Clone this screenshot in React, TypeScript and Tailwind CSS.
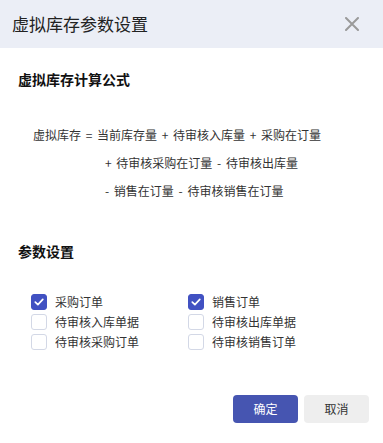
import React, { useState } from "react";

const font = { fontFamily: '"Noto Sans CJK SC", "Noto Sans", sans-serif' };

function Check({ checked }: { checked: boolean }) {
  return (
    <span
      className={
        "w-4 h-4 rounded-[3px] flex items-center justify-center shrink-0 " +
        (checked ? "bg-[#4151c2] border border-[#4151c2]" : "bg-white border border-[#d3d8e6]")
      }
    >
      {checked && (
        <svg width="12" height="12" viewBox="0 0 12 12">
          <path d="M2.3 6.2 L4.9 8.7 L9.8 3.4" fill="none" stroke="white" strokeWidth="1.7" strokeLinecap="round" strokeLinejoin="round" />
        </svg>
      )}
    </span>
  );
}

export default function App() {
  const [vals, setVals] = useState<boolean[]>([true, true, false, false, false, false]);
  const labels = ["采购订单", "销售订单", "待审核入库单据", "待审核出库单据", "待审核采购订单", "待审核销售订单"];
  const toggle = (i: number) => setVals((v) => v.map((x, j) => (j === i ? !x : x)));
  return (
    <div className="w-[383px] h-[443px] bg-white flex flex-col" style={font}>
      <div className="h-12 bg-[#ebeef6] flex items-center justify-between pl-3 pr-[24px] shrink-0">
        <span className="text-[17px] text-[#222]">虚拟库存参数设置</span>
        <svg width="14" height="14" viewBox="0 0 14 14">
          <path d="M1 1 L13 13 M13 1 L1 13" stroke="#9a9a9a" strokeWidth="2" strokeLinecap="round" />
        </svg>
      </div>
      <div className="pl-[18px] pt-[21px] text-[14px] font-bold text-[#111] leading-5">虚拟库存计算公式</div>
      <div className="text-[12px] text-[#333] leading-[28px] mt-[32px] [word-spacing:2px]">
        <div className="pl-[33px]">虚拟库存 = 当前库存量 + 待审核入库量 + 采购在订量</div>
        <div className="pl-[105px]">+ 待审核采购在订量 - 待审核出库量</div>
        <div className="pl-[105px]">- 销售在订量 - 待审核销售在订量</div>
      </div>
      <div className="pl-[18px] mt-[36px] text-[14px] font-bold text-[#111] leading-5">参数设置</div>
      <div className="grid grid-cols-[157px_1fr] pl-[31px] mt-[31px]">
        {labels.map((l, i) => (
          <label key={i} className="flex items-center gap-2 h-5 text-[12px] text-[#333] cursor-pointer" onClick={() => toggle(i)}>
            <Check checked={vals[i]} />
            <span>{l}</span>
          </label>
        ))}
      </div>
      <div className="flex justify-end gap-[6px] pr-[14px] mt-[43px]">
        <button className="w-[65px] h-7 rounded bg-[#4655b1] text-white text-[12px]">确定</button>
        <button className="w-[65px] h-7 rounded bg-[#eeeeee] text-[#333] text-[12px]">取消</button>
      </div>
    </div>
  );
}
